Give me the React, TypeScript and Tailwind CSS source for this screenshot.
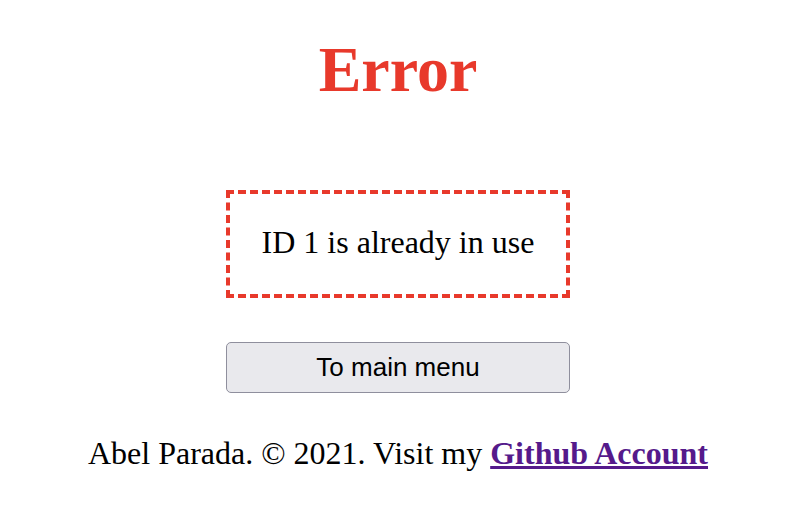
export default function App() {
  return (
    <div className="flex flex-col items-center bg-white w-[796px] min-h-[512px] font-['Liberation_Serif',serif] text-black">
      <h1 className="mt-[38px] text-[64px] leading-[64px] font-bold text-[#e8392b]">Error</h1>
      <div className="mt-[88px] w-[344px] h-[108px] border-4 border-dashed border-[#e8392b] flex items-center justify-center text-[32px] pb-[4px]">
        ID 1 is already in use
      </div>
      <button className="mt-[44px] w-[344px] h-[51px] rounded-[5px] border border-[#8f8f9d] bg-[#e9e9ed] font-['Liberation_Sans',sans-serif] text-[26px]">
        To main menu
      </button>
      <p className="mt-[40px] text-[32px] leading-[40px]">
        Abel Parada. © 2021. Visit my{" "}
        <a href="#" className="font-bold text-[#551a8b] underline">
          Github Account
        </a>
      </p>
    </div>
  );
}
